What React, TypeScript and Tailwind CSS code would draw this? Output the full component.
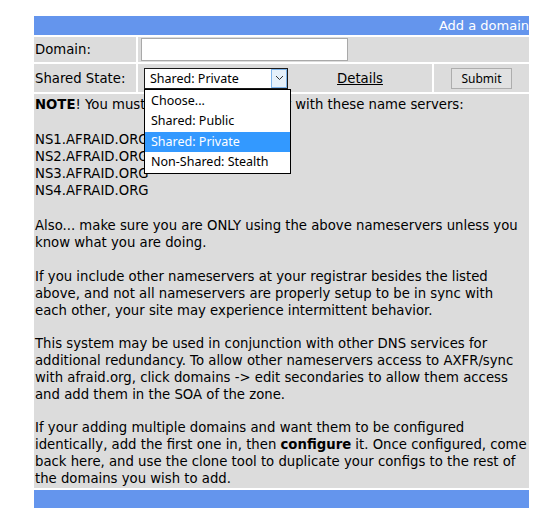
import React from "react";

const body = { fontFamily: '"DejaVu Sans", Verdana, sans-serif' };
const ui = { fontFamily: '"Noto Sans", Tahoma, sans-serif' };

const options = ["Choose...", "Shared: Public", "Shared: Private", "Non-Shared: Stealth"];

function Chevron() {
  return (
    <svg width="9" height="6" viewBox="0 0 9 6" fill="none">
      <path d="M1 1 L4.5 4.5 L8 1" stroke="#333" strokeWidth="1" />
    </svg>
  );
}

export default function App() {
  return (
    <div className="min-h-[515px] w-[542px] bg-white pt-[16px] pl-[34px] text-[13.25px] text-black" style={body}>
      <div className="flex w-[495px] flex-col gap-[2px]">
        {/* title bar */}
        <div className="h-[19px] bg-[#6495ed] text-right text-[13px] leading-[19px] text-white">Add a domain</div>

        {/* domain row */}
        <div className="flex h-[25px] gap-[2px]">
          <div className="flex w-[102px] items-center bg-[#dcdcdc] pl-[1px] pt-[1px]">Domain:</div>
          <div className="flex flex-1 items-center bg-[#dcdcdc] pl-[3px]">
            <input
              type="text"
              className="h-[23px] w-[207px] border border-[#a9a9a9] bg-white outline-none"
              aria-label="Domain"
            />
          </div>
        </div>

        {/* shared state row */}
        <div className="flex h-[28px] gap-[2px]">
          <div className="flex w-[102px] items-center bg-[#dcdcdc] pl-[1px] pt-[1px]">Shared State:</div>
          <div className="flex flex-1 items-center bg-[#dcdcdc] pl-[6px]">
            <div className="relative">
              <div
                className="flex h-[21px] w-[144px] items-center border border-[#1a1a1a] bg-white text-[12.5px]"
                style={ui}
              >
                <span className="flex-1 pl-[5px] leading-[19px]">Shared: Private</span>
                <span className="flex h-[19px] w-[16px] items-center justify-center border border-[#7eb4ea] bg-[#e5f1fb]">
                  <Chevron />
                </span>
              </div>
              {/* open option list */}
              <div
                className="absolute left-0 top-[21px] z-10 w-[147px] border border-black bg-white pt-[1px] text-[12.5px]"
                style={ui}
              >
                {options.map((o) => (
                  <div
                    key={o}
                    className={
                      o === "Shared: Private"
                        ? "h-[20.5px] bg-[#3399ff] pl-[6px] leading-[20.5px] text-white"
                        : "h-[20.5px] pl-[6px] leading-[20.5px] text-black"
                    }
                  >
                    {o}
                  </div>
                ))}
              </div>
            </div>
            <div className="flex-1 pt-[1px] text-center">
              <a className="underline">Details</a>
            </div>
          </div>
          <div className="flex w-[95px] items-center justify-center bg-[#dcdcdc]">
            <button
              className="h-[21px] w-[61px] border border-[#adadad] bg-[#e1e1e1] text-[12px] leading-[19px] text-black"
              style={ui}
            >
              Submit
            </button>
          </div>
        </div>

        {/* notes */}
        <div className="bg-[#dcdcdc] px-[1px] pt-[2px] pb-[1px] leading-[17px]">
          <p className="mb-[18px]">
            <b>NOTE</b>! You must update your registrar with these name servers:
          </p>
          <p className="mb-[18px]">
            NS1.AFRAID.ORG
            <br />
            NS2.AFRAID.ORG
            <br />
            NS3.AFRAID.ORG
            <br />
            NS4.AFRAID.ORG
          </p>
          <p className="mb-[17px]">
            Also... make sure you are ONLY using the above nameservers unless you know what you are doing.
          </p>
          <p className="mb-[16px]">
            If you include other nameservers at your registrar besides the listed above, and not all nameservers
            are properly setup to be in sync with each other, your site may experience intermittent behavior.
          </p>
          <p className="mb-[16px]">
            This system may be used in conjunction with other DNS services for additional redundancy. To allow
            other nameservers access to AXFR/sync with afraid.org, click domains -&gt; edit secondaries to allow
            them access and add them in the SOA of the zone.
          </p>
          <p>
            If your adding multiple domains and want them to be configured identically, add the first one in,
            then <b>configure</b> it. Once configured, come back here, and use the clone tool to duplicate your
            configs to the rest of the domains you wish to add.
          </p>
        </div>

        {/* bottom bar */}
        <div className="h-[18px] bg-[#6495ed]" />
      </div>
    </div>
  );
}
